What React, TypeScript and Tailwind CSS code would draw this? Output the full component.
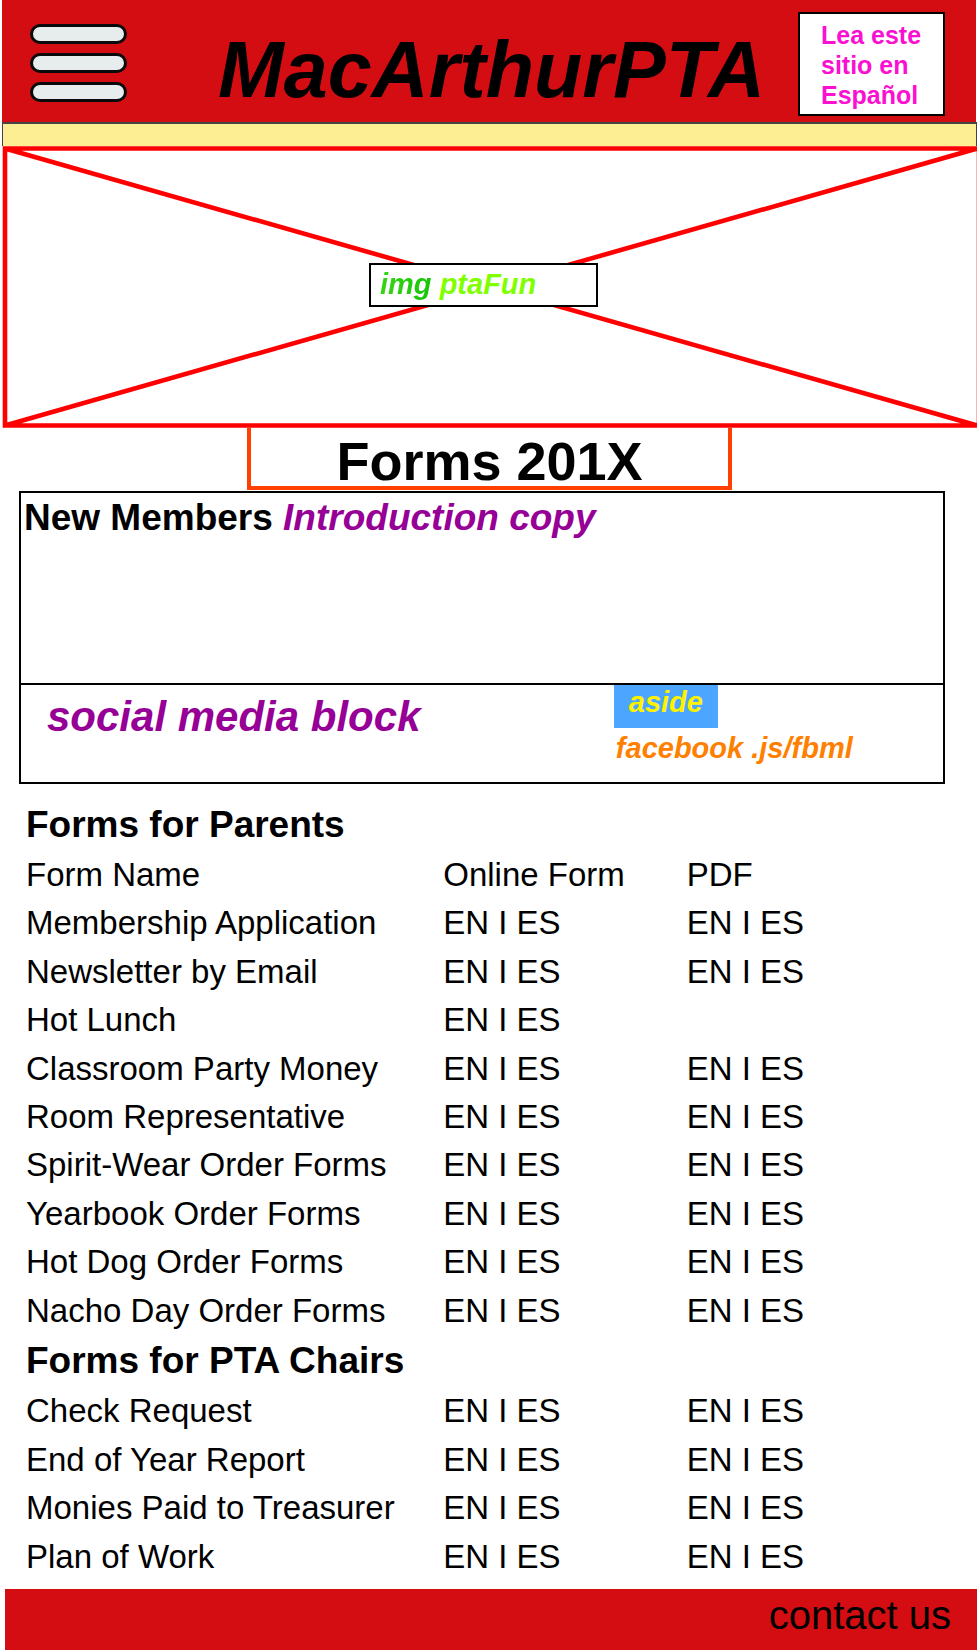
type FormRow = { name: string; online: boolean; pdf: boolean };

const parentForms: FormRow[] = [
  { name: "Membership Application", online: true, pdf: true },
  { name: "Newsletter by Email", online: true, pdf: true },
  { name: "Hot Lunch", online: true, pdf: false },
  { name: "Classroom Party Money", online: true, pdf: true },
  { name: "Room Representative", online: true, pdf: true },
  { name: "Spirit-Wear Order Forms", online: true, pdf: true },
  { name: "Yearbook Order Forms", online: true, pdf: true },
  { name: "Hot Dog Order Forms", online: true, pdf: true },
  { name: "Nacho Day Order Forms", online: true, pdf: true },
];

const chairForms: FormRow[] = [
  { name: "Check Request", online: true, pdf: true },
  { name: "End of Year Report", online: true, pdf: true },
  { name: "Monies Paid to Treasurer", online: true, pdf: true },
  { name: "Plan of Work", online: true, pdf: true },
];

function Languages() {
  return (
    <>
      <a href="#en">EN</a> I <a href="#es">ES</a>
    </>
  );
}

function Columns() {
  return (
    <colgroup>
      <col className="w-[45.4%]" />
      <col className="w-[26.5%]" />
      <col />
    </colgroup>
  );
}

function Rows({ rows }: { rows: FormRow[] }) {
  return (
    <tbody>
      {rows.map((row) => (
        <tr key={row.name}>
          <th scope="row" className="p-0 font-normal">{row.name}</th>
          <td className="p-0">{row.online && <Languages />}</td>
          <td className="p-0">{row.pdf && <Languages />}</td>
        </tr>
      ))}
    </tbody>
  );
}

function Header() {
  return (
    <header className="mr-px flex h-[122px] items-start bg-[#d40d12] pr-[31px] pl-7">
      <button type="button" aria-label="Menu" className="mt-6 flex w-[97px] shrink-0 flex-col gap-[9px]">
        <span className="h-5 w-full rounded-full border-3 border-[#0a0a0a] bg-[#e7edec]" />
        <span className="h-5 w-full rounded-full border-3 border-[#0a0a0a] bg-[#e7edec]" />
        <span className="h-5 w-full rounded-full border-3 border-[#0a0a0a] bg-[#e7edec]" />
      </button>
      <h1 className="mt-[30px] flex-1 pl-[58px] text-center text-[79px] leading-20 font-bold italic">MacArthurPTA</h1>
      <a
        href="#es"
        className="mt-3 w-[147px] shrink-0 border-2 border-black bg-white pt-[6px] pr-4 pb-1 pl-[21px] text-[25px] leading-[30px] font-bold text-[#fb0fd0]"
      >
        Lea este sitio en Español
      </a>
    </header>
  );
}

function Hero() {
  return (
    <div className="relative flex h-[282px] items-center justify-center">
      <svg className="absolute inset-0 h-full w-full" viewBox="0 0 975 282" preserveAspectRatio="none" aria-hidden="true">
        <path d="M3 2.5H977V279.500H3Z M3 2.500L975 279.500 M975 2.500L3 279.500" fill="none" stroke="#ff0000" strokeWidth="4.600" />
      </svg>
      <div className="relative mr-3 mb-1 h-11 w-[229px] border-2 border-black bg-white pl-[9px] text-[29px] leading-[38px] font-bold italic">
        <span className="bg-linear-to-r from-[#34d614] to-[#14c408] bg-clip-text text-transparent">img</span>{" "}
        <span className="text-[#80ff00]">ptaFun</span>
      </div>
    </div>
  );
}

export default function App() {
  return (
    <div className="bg-white pl-[2px] font-['Liberation_Sans',Arial,sans-serif] text-black">
      <Header />
      <div className="h-6 border-x border-t-2 border-[#444444] bg-[#fdee93]" />
      <Hero />
      <main>
        <h2 className="mx-auto h-[62px] w-[485px] max-w-full border-4 border-t-0 border-[#ff4000] text-center text-[54px] leading-[66px] font-bold">
          Forms 201X
        </h2>
        <div className="mt-px mr-8 ml-[17px] border-2 border-black">
          <section className="h-[190px] pt-[3px] pl-[3px] text-[37px] leading-11 font-bold">
            New Members <em className="text-[#960096]">Introduction copy</em>
          </section>
          <section className="flex h-[99px] border-t-2 border-black font-bold italic">
            <h3 className="flex-1 pt-2 pl-[26px] text-[42px] leading-12 text-[#960096]">social media block</h3>
            <aside className="w-[35.7%] text-[29px]">
              <div className="h-[43px] w-26 bg-[#4ca6ff] text-center leading-[34px] text-[#fff200]">aside</div>
              <p className="pl-[2px] leading-10 text-[#ff8000]">facebook .js/fbml</p>
            </aside>
          </section>
        </div>
        <div className="mt-[17px] mr-8 ml-6 text-[33px] leading-12">
          <h3 id="parents" className="mb-[2px] text-[37px] leading-12 font-bold">Forms for Parents</h3>
          <table aria-labelledby="parents" className="h-[484px] w-full table-fixed text-left">
            <Columns />
            <thead>
              <tr>
                <th scope="col" className="p-0 font-normal">Form Name</th>
                <th scope="col" className="p-0 font-normal">Online Form</th>
                <th scope="col" className="p-0 font-normal">PDF</th>
              </tr>
            </thead>
            <Rows rows={parentForms} />
          </table>
          <h3 id="chairs" className="text-[37px] leading-[52px] font-bold">Forms for PTA Chairs</h3>
          <table aria-labelledby="chairs" className="h-[194px] w-full table-fixed text-left">
            <Columns />
            <Rows rows={chairForms} />
          </table>
        </div>
      </main>
      <footer className="mt-2 ml-[3px] bg-[#d40d12] pr-[26px] pb-[9px] text-right text-[40px] leading-[52px]">
        <a href="#contact">contact us</a>
      </footer>
    </div>
  );
}
